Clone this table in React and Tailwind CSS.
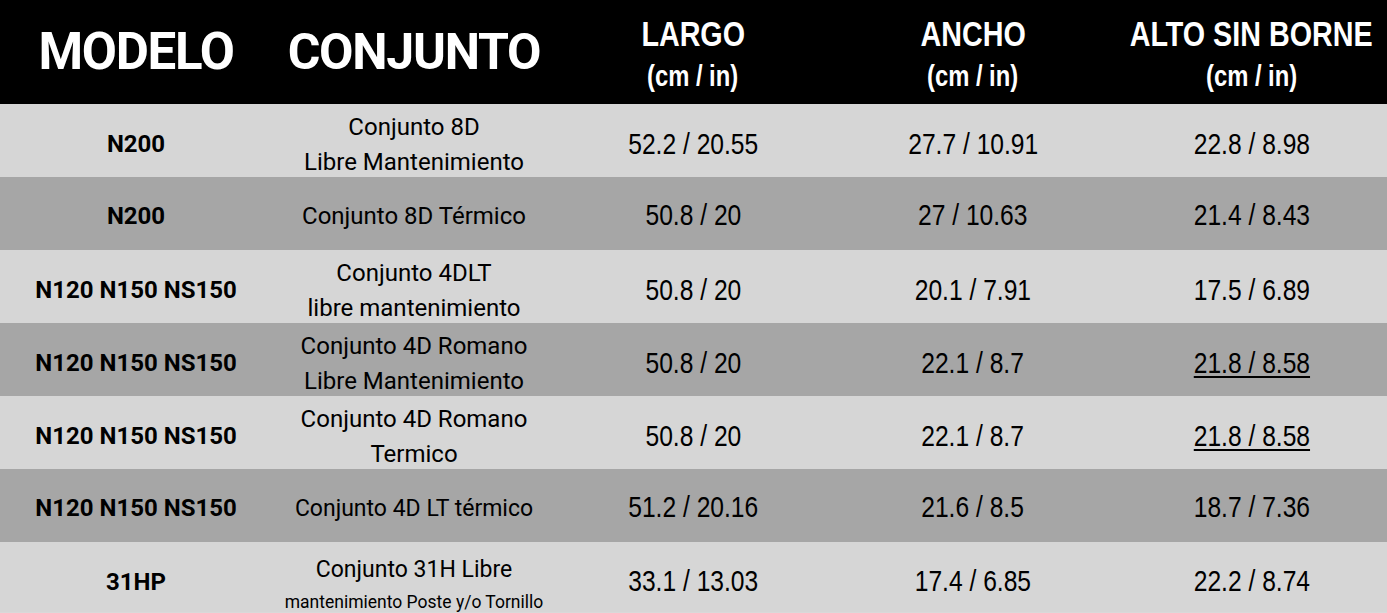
const rows = [
  {
    modelo: "N200",
    conjunto: ["Conjunto 8D", "Libre Mantenimiento"],
    largo: "52.2 / 20.55",
    ancho: "27.7 / 10.91",
    alto: "22.8 / 8.98",
  },
  {
    modelo: "N200",
    conjunto: ["Conjunto 8D Térmico"],
    largo: "50.8 / 20",
    ancho: "27 / 10.63",
    alto: "21.4 / 8.43",
  },
  {
    modelo: "N120 N150 NS150",
    conjunto: ["Conjunto 4DLT", "libre mantenimiento"],
    largo: "50.8 / 20",
    ancho: "20.1 / 7.91",
    alto: "17.5 / 6.89",
  },
  {
    modelo: "N120 N150 NS150",
    conjunto: ["Conjunto 4D Romano", "Libre Mantenimiento"],
    largo: "50.8 / 20",
    ancho: "22.1 / 8.7",
    alto: "21.8 / 8.58",
    underline: true,
  },
  {
    modelo: "N120 N150 NS150",
    conjunto: ["Conjunto 4D Romano", "Termico"],
    largo: "50.8 / 20",
    ancho: "22.1 / 8.7",
    alto: "21.8 / 8.58",
    underline: true,
  },
  {
    modelo: "N120 N150 NS150",
    conjunto: ["Conjunto 4D LT térmico"],
    largo: "51.2 / 20.16",
    ancho: "21.6 / 8.5",
    alto: "18.7 / 7.36",
    small: true,
  },
  {
    modelo: "31HP",
    conjunto: ["Conjunto 31H Libre", "mantenimiento Poste y/o Tornillo"],
    largo: "33.1 / 13.03",
    ancho: "17.4 / 6.85",
    alto: "22.2 / 8.74",
    last: true,
  },
];

const cols = "grid grid-cols-[272px_284px_274px_286px_minmax(0,1fr)]";
// no Arial Narrow here, so squeeze Liberation Sans
const narrow =
  "inline-block whitespace-nowrap scale-x-[0.82] font-['Liberation_Sans',sans-serif]";
const roboto = "font-['Roboto',sans-serif]";

const Header = () => (
  <div className={`${cols} h-[104px] bg-black text-white`}>
    <div className={`flex items-center justify-center ${roboto} font-bold text-[51px] tracking-tight`}>
      MODELO
    </div>
    <div className={`flex items-center justify-center ${roboto} font-bold text-[50px] tracking-tight`}>
      CONJUNTO
    </div>
    {["LARGO", "ANCHO", "ALTO SIN BORNE"].map((h) => (
      <div key={h} className="flex flex-col items-center pt-[16px] font-bold leading-none min-w-0">
        <span className={`${narrow} text-[35px]`}>{h}</span>
        <span className={`${narrow} text-[29px] mt-[11px]`}>(cm / in)</span>
      </div>
    ))}
  </div>
);

const App = () => {
  return (
    <div className="w-[1387px] h-[613px] overflow-hidden bg-[#d9d9d9] text-black">
      <Header />
      {rows.map((r, i) => (
        <div
          key={i}
          className={`${cols} ${r.last ? "h-[70px]" : "h-[73px]"} ${
            i % 2 === 0 ? "bg-[#d6d6d6]" : "bg-[#a6a6a6]"
          }`}
        >
          <div className={`flex items-center justify-center pt-[4px] ${roboto} font-bold text-[24px]`}>
            {r.modelo}
          </div>
          <div
            className={`flex flex-col items-center justify-center ${
              r.last ? "pt-[10px]" : "pt-[6px]"
            } ${roboto} text-center leading-[35px] whitespace-nowrap`}
          >
            {r.conjunto.map((line, j) => (
              <span
                key={j}
                className={
                  r.small
                    ? "text-[23px]"
                    : r.last && j === 1
                    ? "text-[17.5px] leading-[30px]"
                    : r.last
                    ? "text-[23px]"
                    : "text-[24px]"
                }
              >
                {line}
              </span>
            ))}
          </div>
          <div className="flex items-center justify-center pt-[2px]">
            <span className={`${narrow} text-[30px]`}>{r.largo}</span>
          </div>
          <div className="flex items-center justify-center pt-[2px]">
            <span className={`${narrow} text-[30px]`}>{r.ancho}</span>
          </div>
          <div className="flex items-center justify-center pt-[2px] min-w-0">
            <span
              className={`${narrow} text-[30px] ${
                r.underline ? "underline underline-offset-[3px] decoration-[1.5px]" : ""
              }`}
            >
              {r.alto}
            </span>
          </div>
        </div>
      ))}
    </div>
  );
};

export default App;
